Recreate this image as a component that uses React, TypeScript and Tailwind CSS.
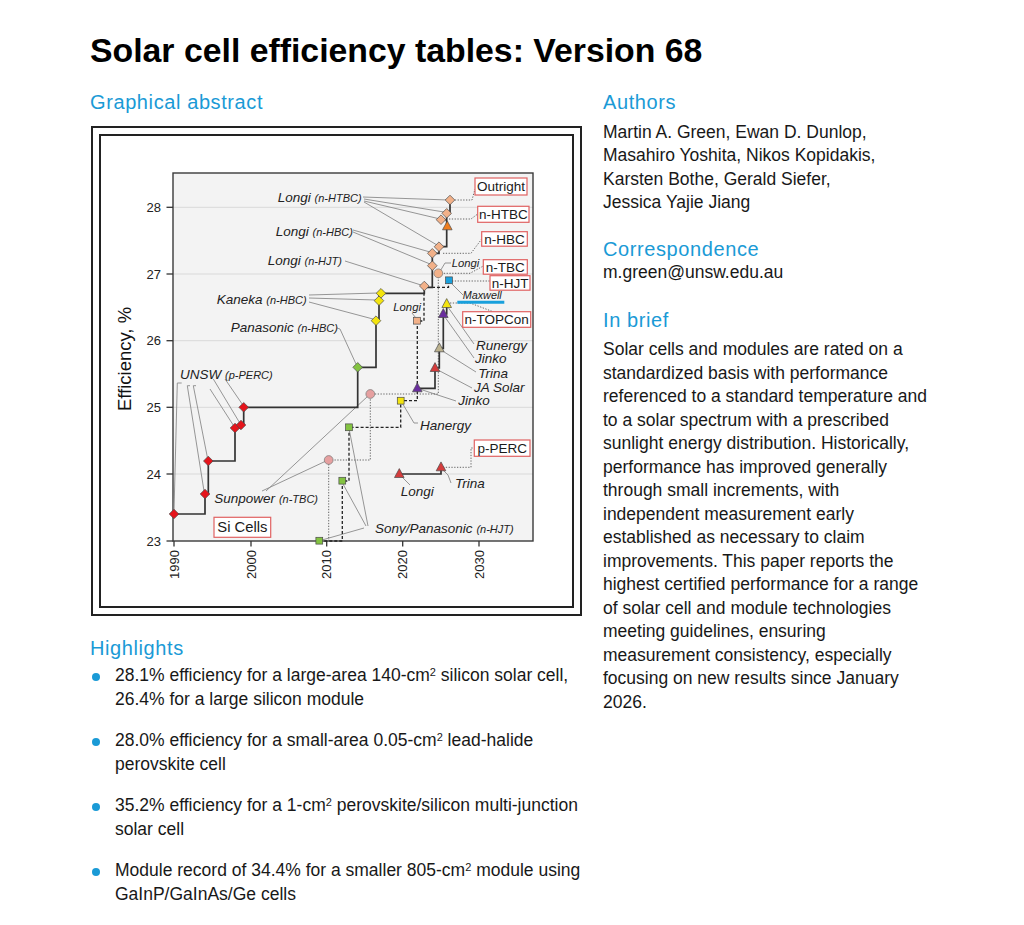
import React from 'react';

type Pt = [number, number];

const BLUE = '#1a9ad6';
const INK = '#222';
const LEADER = '#8a8a8a';

// marker colours
const RED = '#e5141b';
const YELLOW = '#f3e40f';
const GREEN = '#83c341';
const PEACH = '#f2b189';
const ORANGE = '#ef7d1e';
const PURPLE = '#6a2e9e';
const TAN = '#bcb28e';
const BRICK = '#d43c3c';
const CYAN = '#19a0dc';
const PINK = '#e6a0a0';

const yTicks: [string, number][] = [
  ['23', 542],
  ['24', 475],
  ['25', 408.3],
  ['26', 341.7],
  ['27', 275],
  ['28', 208.3],
];

const xTicks: [string, number][] = [
  ['1990', 174],
  ['2000', 251],
  ['2010', 326.7],
  ['2020', 402.7],
  ['2030', 479],
];

const diamonds: { fill: string; pts: Pt[] }[] = [
  { fill: RED, pts: [[174, 515], [205, 495], [208.3, 462], [235, 429], [241, 426], [243.7, 408.3]] },
  { fill: GREEN, pts: [[357.7, 368.3]] },
  { fill: YELLOW, pts: [[376, 321.7], [379, 301.7], [381, 294.3]] },
  { fill: PEACH, pts: [[424.3, 287], [432.3, 266.7], [432.3, 254.3], [439, 247.7], [441, 220.7], [446.7, 214.3], [450, 201]] },
];

const triangles: { fill: string; pts: Pt[] }[] = [
  { fill: ORANGE, pts: [[447.3, 227.3]] },
  { fill: YELLOW, pts: [[446.7, 305]] },
  { fill: PURPLE, pts: [[443.3, 315], [417.3, 389.3]] },
  { fill: TAN, pts: [[439.3, 349.3]] },
  { fill: BRICK, pts: [[435, 369], [399.3, 475], [441, 468.3]] },
];

const squares: { fill: string; pts: Pt[] }[] = [
  { fill: PEACH, pts: [[417, 321.7]] },
  { fill: CYAN, pts: [[449, 281.3]] },
  { fill: YELLOW, pts: [[400.7, 401.7]] },
  { fill: GREEN, pts: [[349, 428.3], [342.3, 481.7], [319.3, 541.7]] },
];

const circles: { fill: string; pts: Pt[] }[] = [
  { fill: PINK, pts: [[328.7, 461], [370.3, 395]] },
  { fill: PEACH, pts: [[438.3, 274.3]] },
];

// thin grey lines from the names to their points
const leaders: string[] = [
  '363,198 448,201',
  '364,200 444,213',
  '364,202 438,219.5',
  '364,203 437,246',
  '353,231 430,253',
  '353,233 430,265',
  '345,262 421,286',
  '309,296 378,294',
  '309,299 376,301',
  '309,303 373,320',
  '337,329 340,330 356,365',
  '181.7,384 177.3,384 174,512',
  '190,386.7 187.3,386.7 204,492',
  '196,386.7 193.3,386.7 207.5,459',
  '210,390 233.5,426.5',
  '213.3,380 239.5,423.5',
  '225,380 242.5,405.5',
  '262,492 326,462',
  '266,492 368,397',
  '368,527 349.5,432',
  '366,527 343,485',
  '364,529 322,541',
  '418,424 414,424 402.5,404.5',
  '456,402 419.5,390',
  '472,389 437,370.5',
  '476,373 441,351',
  '474,359 444.5,317.5',
  '474,345 447.5,307.5',
  '410,486 401,477',
  '451,484 448,476 442.5,470.5',
  '451,264 445,264 440.5,271.5',
  '412,314 415.5,318.5',
  '452,285 463,296',
];

// dotted connectors to the record boxes
const dotted: string[] = [
  'M452,201 H472 L475,190',
  'M449,220 H471 L477.7,215',
  'M443,254.3 H471 L481.7,240',
  'M441,274.3 H470 L483.3,267',
  'M452,282 H490',
  'M450,304 H470 L493,312.7',
  'M443,468.3 H471 V449 H474.3',
  'M328.7,542 V461 H370.3 V395 H438.3 V277',
];

const labels: { x: number; y: number; name: string; sub?: string; size?: number }[] = [
  { x: 277.7, y: 203, name: 'Longi', sub: '(n-HTBC)' },
  { x: 275.7, y: 236.7, name: 'Longi', sub: '(n-HBC)' },
  { x: 267.7, y: 265.7, name: 'Longi', sub: '(n-HJT)' },
  { x: 216.7, y: 305, name: 'Kaneka', sub: '(n-HBC)' },
  { x: 230.7, y: 333.3, name: 'Panasonic', sub: '(n-HBC)' },
  { x: 180, y: 380, name: 'UNSW', sub: '(p-PERC)' },
  { x: 214.3, y: 504, name: 'Sunpower', sub: '(n-TBC)' },
  { x: 375, y: 534, name: 'Sony/Panasonic', sub: '(n-HJT)' },
  { x: 400.7, y: 496.7, name: 'Longi' },
  { x: 455, y: 489.3, name: 'Trina' },
  { x: 420, y: 430.7, name: 'Hanergy' },
  { x: 458.3, y: 405.7, name: 'Jinko' },
  { x: 474, y: 393.3, name: 'JA Solar' },
  { x: 478.3, y: 379, name: 'Trina' },
  { x: 475, y: 364, name: 'Jinko' },
  { x: 476, y: 350.7, name: 'Runergy' },
  { x: 451.7, y: 268, name: 'Longi', size: 11.3 },
  { x: 393.3, y: 312, name: 'Longi', size: 11.3 },
  { x: 462.7, y: 300, name: 'Maxwell', size: 10.8 },
];

const boxes: { x: number; y: number; w: number; h: number; text: string; size?: number }[] = [
  { x: 475, y: 179, w: 52, h: 17, text: 'Outright' },
  { x: 477.7, y: 207.3, w: 51.3, h: 16, text: 'n-HTBC' },
  { x: 481.7, y: 232.7, w: 45.6, h: 14.5, text: 'n-HBC' },
  { x: 483.3, y: 260.7, w: 44, h: 14.5, text: 'n-TBC' },
  { x: 490, y: 276.7, w: 40, h: 14.5, text: 'n-HJT' },
  { x: 462.7, y: 312.7, w: 68, h: 15.6, text: 'n-TOPCon' },
  { x: 474.3, y: 441, w: 55.7, h: 16.3, text: 'p-PERC' },
  { x: 214, y: 518.3, w: 56.7, h: 20, text: 'Si Cells', size: 14.8 },
];

function EfficiencyChart() {
  return (
    <svg width="471" height="470" viewBox="101 137 471 470" className="block">
      {/* plot area */}
      <rect x="173" y="174" width="360" height="368" fill="#f3f3f3" />
      {yTicks.slice(1).map(([, y]) => (
        <line key={y} x1="173" x2="533" y1={y} y2={y} stroke="#d9d9d9" strokeWidth="1" />
      ))}
      <rect x="173" y="174" width="360" height="368" fill="none" stroke="#3a3a3a" strokeWidth="1.4" />

      {/* axes */}
      {yTicks.map(([t, y]) => (
        <g key={t}>
          <line x1="166.5" x2="173" y1={y} y2={y} stroke="#333" strokeWidth="1.3" />
          <text x="161" y={y + 4.6} textAnchor="end" fontSize="13" fill={INK}>
            {t}
          </text>
        </g>
      ))}
      {xTicks.map(([t, x]) => (
        <g key={t}>
          <line x1={x} x2={x} y1="542" y2="547.5" stroke="#333" strokeWidth="1.3" />
          <text
            x={x + 4.5}
            y="551"
            textAnchor="end"
            fontSize="13"
            fill={INK}
            transform={`rotate(-90 ${x + 4.5} 551)`}
          >
            {t}
          </text>
        </g>
      ))}
      <text x="130.5" y="360" textAnchor="middle" fontSize="18.5" fill="#111" transform="rotate(-90 130.5 360)">
        Efficiency, %
      </text>

      {/* leader lines */}
      {leaders.map((p) => (
        <polyline key={p} points={p} fill="none" stroke={LEADER} strokeWidth="0.9" />
      ))}

      {/* connectors */}
      {dotted.map((d) => (
        <path key={d} d={d} fill="none" stroke="#666" strokeWidth="1" strokeDasharray="1.3 1.5" />
      ))}
      <path
        d="M319.3,542 H342.3 V482 H349 V428.3 H400.7 V401.7 H417.3 V322 H424 V290"
        fill="none"
        stroke="#222"
        strokeWidth="1.3"
        strokeDasharray="3 2"
      />
      <path d="M432,288.3 H448.5 V284" fill="none" stroke="#222" strokeWidth="1.3" strokeDasharray="3 2" />

      {/* record steps */}
      <path
        d="M174,515 H205 V495 H208.3 V462 H235 V429 H241 V426 H243.7 V408.3 H357.7 V368.3 H376 V321.7 H379 V294.3 H424.3 V288.3 H432.3 V254.3 H439 V247.7 H446.7 V214.3 H450 V201"
        fill="none"
        stroke="#333"
        strokeWidth="1.7"
      />
      <path d="M441,220.7 H446.7" fill="none" stroke="#333" strokeWidth="1.5" />
      <path
        d="M417.3,389.3 H435 V369 H439.3 V349.3 H443.3 V315 H446.7 V305"
        fill="none"
        stroke="#333"
        strokeWidth="1.7"
      />
      <path d="M399.3,475 H441 V468.3" fill="none" stroke="#333" strokeWidth="1.7" />

      {/* Maxwell highlight */}
      <line x1="457.3" x2="504.3" y1="303.3" y2="303.3" stroke={CYAN} strokeWidth="3" />

      {/* markers */}
      {diamonds.map(({ fill, pts }) =>
        pts.map(([x, y]) => (
          <polygon
            key={`d${x}-${y}`}
            points={`${x},${y - 4.8} ${x + 4.8},${y} ${x},${y + 4.8} ${x - 4.8},${y}`}
            fill={fill}
            stroke="#4a4a4a"
            strokeWidth="0.7"
          />
        )),
      )}
      {triangles.map(({ fill, pts }) =>
        pts.map(([x, y]) => (
          <polygon
            key={`t${x}-${y}`}
            points={`${x},${y - 5.4} ${x + 4.8},${y + 3.5} ${x - 4.8},${y + 3.5}`}
            fill={fill}
            stroke="#4a4a4a"
            strokeWidth="0.7"
          />
        )),
      )}
      {squares.map(({ fill, pts }) =>
        pts.map(([x, y]) => (
          <rect
            key={`s${x}-${y}`}
            x={x - 3.4}
            y={y - 3.4}
            width="6.8"
            height="6.8"
            fill={fill}
            stroke="#4a4a4a"
            strokeWidth="0.7"
          />
        )),
      )}
      {circles.map(({ fill, pts }) =>
        pts.map(([x, y]) => (
          <circle key={`c${x}-${y}`} cx={x} cy={y} r="4.4" fill={fill} stroke="#777" strokeWidth="0.7" />
        )),
      )}

      {/* names */}
      {labels.map(({ x, y, name, sub, size }) => (
        <text key={`${name}${x}`} x={x} y={y} fontSize={size ?? 13.5} fontStyle="italic" fill={INK}>
          {name}
          {sub && (
            <tspan fontSize="11" dx="3.8">
              {sub}
            </tspan>
          )}
        </text>
      ))}

      {/* record boxes */}
      {boxes.map(({ x, y, w, h, text, size }) => (
        <g key={text}>
          <rect x={x} y={y} width={w} height={h} fill="#fff" stroke="#e06262" strokeWidth="1.2" />
          <text x={x + w / 2} y={y + h / 2 + 4.8} textAnchor="middle" fontSize={size ?? 13.5} fill="#1a1a1a">
            {text}
          </text>
        </g>
      ))}
    </svg>
  );
}

function SectionTitle({ children, className = '' }: { children: React.ReactNode; className?: string }) {
  return <h2 className={`text-[20px] leading-[24px] tracking-[0.6px] text-[#1a9ad6] ${className}`}>{children}</h2>;
}

const highlights: React.ReactNode[] = [
  <>
    28.1% efficiency for a large-area 140-cm<sup className="text-[11px]">2</sup> silicon solar cell, 26.4% for a
    large silicon module
  </>,
  <>
    28.0% efficiency for a small-area 0.05-cm<sup className="text-[11px]">2</sup> lead-halide perovskite cell
  </>,
  <>
    35.2% efficiency for a 1-cm<sup className="text-[11px]">2</sup> perovskite/silicon multi-junction solar cell
  </>,
  <>
    Module record of 34.4% for a smaller 805-cm<sup className="text-[11px]">2</sup> module using GaInP/GaInAs/Ge
    cells
  </>,
];

const authors = [
  'Martin A. Green',
  'Ewan D. Dunlop',
  'Masahiro Yoshita',
  'Nikos Kopidakis',
  'Karsten Bothe',
  'Gerald Siefer',
  'Jessica Yajie Jiang',
];

export default function App() {
  return (
    <div className="w-[1024px] h-[925px] bg-white pl-[90px] pt-[30px] font-['Liberation_Sans',Arial,sans-serif] text-[#181818]">
      <h1 className="text-[33.8px] leading-[40px] font-bold text-black">Solar cell efficiency tables: Version 68</h1>

      <div className="mt-[20px] flex gap-[13px]">
        {/* left column */}
        <div className="w-[500px]">
          <SectionTitle>Graphical abstract</SectionTitle>
          <figure className="mt-[12px] ml-px w-[491px] h-[490px] border-2 border-[#222] p-[6px]">
            <div className="w-full h-full border-2 border-[#222] bg-white">
              <EfficiencyChart />
            </div>
          </figure>

          <SectionTitle className="mt-[19.5px]">Highlights</SectionTitle>
          <ul className="mt-[4.5px] space-y-[18px] text-[17.5px] leading-[23.5px]">
            {highlights.map((h, i) => (
              <li key={i} className="flex">
                <span className="mt-[8.5px] ml-[1.5px] w-[8.5px] h-[8.5px] shrink-0 rounded-full bg-[#1a9ad6]" />
                <span className="ml-[15px]">{h}</span>
              </li>
            ))}
          </ul>
        </div>

        {/* right column */}
        <div className="w-[329px] text-[17.5px] leading-[23.5px]">
          <SectionTitle>Authors</SectionTitle>
          <p className="mt-[6.5px]">
            {authors.map((a, i) => (
              <React.Fragment key={a}>
                <span className="whitespace-nowrap">
                  {a}
                  {i < authors.length - 1 ? ',' : ''}
                </span>
                {i < authors.length - 1 ? ' ' : ''}
              </React.Fragment>
            ))}
          </p>

          <SectionTitle className="mt-[22.5px]">Correspondence</SectionTitle>
          <p>m.green@unsw.edu.au</p>

          <SectionTitle className="mt-[23px]">In brief</SectionTitle>
          <p className="mt-[6.5px]">
            Solar cells and modules are rated on a standardized basis with performance referenced to a standard
            temperature and to a solar spectrum with a prescribed sunlight energy distribution. Historically,
            performance has improved generally through small increments, with independent measurement early
            established as necessary to claim improvements. This paper reports the highest certified performance
            for a range of solar cell and module technologies meeting guidelines, ensuring measurement consistency,
            especially focusing on new results since January 2026.
          </p>
        </div>
      </div>
    </div>
  );
}
